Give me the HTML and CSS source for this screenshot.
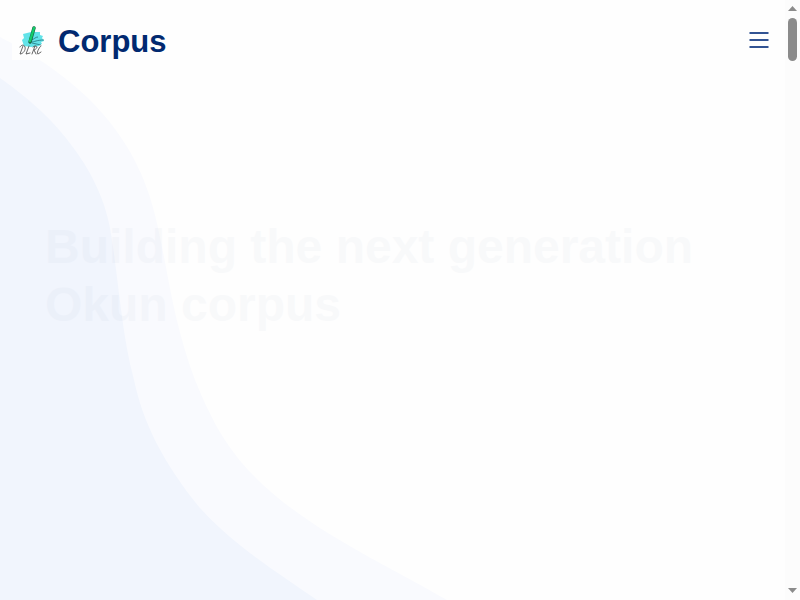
FILE: index.html
```html
<!DOCTYPE html>
<html lang="en">
<head>
<meta charset="utf-8">
<meta name="viewport" content="width=device-width, initial-scale=1">
<title>Corpus</title>
<link rel="stylesheet" href="styles.css">
</head>
<body>
<div class="page">
  <svg class="backdrop" viewBox="0 0 785 600" preserveAspectRatio="xMinYMin slice" aria-hidden="true">
    <path fill="#f9fafe" d="M0 37C50 63 98 97 129 150C152 190 157 222 165 262C172 300 179 337 195 380C209 414 223 444 253 475C302 526 379 561 447 600H0Z"/>
    <path fill="#f1f5fd" d="M0 78C27 97 53 119 75 150C98 182 108 210 112 240C119 286 122 335 134 380C143 423 164 464 200 508C235 546 275 571 317 600H0Z"/>
  </svg>
  <header class="header">
    <a class="brand" href="#">
      <svg class="logo" viewBox="0 0 40 40" aria-hidden="true">
        <path fill="#fefefe" d="M0 0h40v40H0z"/>
        <path fill="#62e3e8" d="M11 14l8-2h9v3l3 1-1 2 2 3-3 1 1 2-3 1 1 1-9 1-7-1-1-3-1-3 2-2z"/>
        <path fill="none" stroke="#23747e" stroke-width=".8" d="M19 20c4-1 4-3 7-3M19 22c4 0 5-2 13-2M20 23l9 2"/>
        <path fill="none" stroke="#176343" stroke-width="3.400" stroke-linecap="round" d="M18 22l4-14"/>
        <path fill="none" stroke="#12cd69" stroke-width="2.400" stroke-linecap="round" d="M18 21l4-13"/>
        <path fill="none" stroke="#555" stroke-width=".9" stroke-linecap="round" d="M11 26l-3 8c3 0 6-4 5-7s-4-2-5 0M17 26l-3 8 4-1M23 26l-3 8M21 27c4-3 6 1 1 3l2 4M29 26c-2 1-5 8-3 8l3-2"/>
      </svg>
      <span>Corpus</span>
    </a>
    <button class="menu" type="button" aria-label="Menu">
      <svg class="menu-icon" viewBox="0 0 28 28" aria-hidden="true"><path d="M4.500 7h19M4.500 14h19M4.500 21h19"/></svg>
    </button>
  </header>
  <main class="hero">
    <h1>Building the next generation Okun corpus</h1>
  </main>
</div>
<div class="scrollbar" aria-hidden="true">
  <svg class="arrow" viewBox="0 0 9 5"><path d="M0 5L4.500 0L9 5z"/></svg>
  <div class="track"><div class="thumb"></div></div>
  <svg class="arrow" viewBox="0 0 9 5"><path d="M0 0h9L4.500 5z"/></svg>
</div>
</body>
</html>
```
FILE: styles.css
```css
* {
  box-sizing: border-box;
}

body {
  margin: 0;
  display: flex;
  height: 100vh;
  overflow: hidden;
  background: #fefefe;
  font-family: "Liberation Sans", Arial, sans-serif;
}

.page {
  position: relative;
  flex: 1;
  min-width: 0;
  display: flex;
  flex-direction: column;
}

.backdrop {
  position: absolute;
  inset: 0;
  width: 100%;
  height: 100%;
}

.header {
  position: relative;
  display: flex;
  align-items: center;
  justify-content: space-between;
  padding: 20px 12px;
}

.brand {
  display: flex;
  align-items: flex-end;
  gap: 6px;
  color: #012970;
  font-size: 31px;
  font-weight: 700;
  line-height: 36px;
  text-decoration: none;
}

.logo {
  width: 40px;
  height: 40px;
}

.menu {
  display: flex;
  padding: 0;
  border: 0;
  background: none;
  cursor: pointer;
}

.menu-icon {
  width: 28px;
  height: 28px;
  fill: none;
  stroke: #315393;
  stroke-width: 2;
}

.hero {
  position: relative;
  flex: 1;
  padding: 138px 45px 0;
}

h1 {
  margin: 0;
  color: #012970;
  font-size: 48px;
  font-weight: 700;
  line-height: 58px;
  opacity: 0.02;
}

.scrollbar {
  width: 15px;
  display: flex;
  flex-direction: column;
  align-items: center;
  padding: 6px 0 7px;
  background: #fcfcfc;
}

.arrow {
  width: 9px;
  height: 5px;
  fill: #8b8b8b;
}

.track {
  flex: 1;
  padding-top: 7px;
}

.thumb {
  width: 9px;
  height: 43px;
  border-radius: 5px;
  background: #8b8b8b;
}
```
